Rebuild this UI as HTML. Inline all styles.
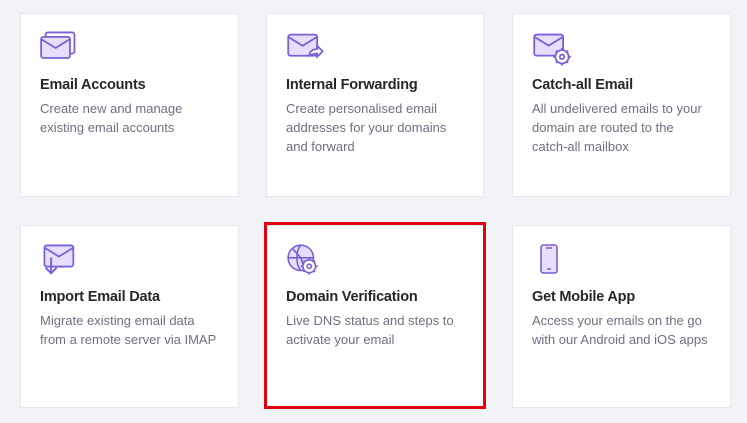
<!DOCTYPE html>
<html><head><style>
body{margin:0;width:747px;height:423px;background:#f2f3f7;position:relative;overflow:hidden;font-family:"Liberation Sans",sans-serif}
.c{position:absolute;background:#fff;border:1px solid #e6e7ee;box-sizing:border-box}
.c svg{position:absolute;left:19px;top:17px}
.t{position:absolute;left:19px;top:63px;font-size:14.5px;font-weight:bold;color:#26272b;letter-spacing:-0.2px}
.d{position:absolute;left:19px;top:85px;font-size:13px;line-height:19px;color:#6d7081;width:180px}
.r{position:absolute;left:264px;top:222px;width:222px;height:187px;border:3px solid #e3000f;box-sizing:border-box}
</style></head><body>
<div class="c" style="left:20px;top:13px;width:219px;height:184px">
<svg width="40" height="34" viewBox="0 0 36 30" fill="none" stroke="#7b5fd6" stroke-width="1.6"><rect x="5" y="1" width="26" height="19" rx="2"/><rect x="1" y="5" width="26" height="19" rx="2" fill="#e6defb"/><path d="M1 7l13 8 13-8"/></svg>
<div class="t">Email Accounts</div><div class="d">Create new and manage existing email accounts</div></div>
<div class="c" style="left:266px;top:13px;width:218px;height:184px">
<svg width="40" height="34" viewBox="0 0 36 30" fill="none" stroke="#7b5fd6" stroke-width="1.6"><rect x="2" y="3" width="26" height="19" rx="2" fill="#e6defb"/><path d="M2 5l13 8 13-8"/><path d="M21 22c0-4 3-6 7-6v-3l5 5-5 5v-3c-3 0-5 1-7 2z" fill="#fff"/></svg>
<div class="t">Internal Forwarding</div><div class="d">Create personalised email addresses for your domains and forward</div></div>
<div class="c" style="left:512px;top:13px;width:219px;height:184px">
<svg width="40" height="36" viewBox="0 0 36 32" fill="none" stroke="#7b5fd6" stroke-width="1.6"><rect x="2" y="3" width="26" height="19" rx="2" fill="#e6defb"/><path d="M2 5l13 8 13-8"/><circle cx="27" cy="23" r="6" fill="#fff"/><circle cx="27" cy="23" r="2"/><path d="M27 15v2M27 29v2M19 23h2M33 23h2M21.5 17.5l1.5 1.5M31 27l1.5 1.5M21.5 28.5l1.5-1.5M31 19l1.5-1.5"/></svg>
<div class="t">Catch-all Email</div><div class="d">All undelivered emails to your domain are routed to the catch&#8209;all mailbox</div></div>
<div class="c" style="left:20px;top:225px;width:219px;height:183px">
<svg width="40" height="36" viewBox="0 0 36 32" fill="none" stroke="#7b5fd6" stroke-width="1.6"><rect x="4" y="2" width="26" height="19" rx="2" fill="#e6defb"/><path d="M4 4l13 8 13-8"/><path d="M10 13v14M5 22l5 5 5-5" stroke-width="1.8"/></svg>
<div class="t">Import Email Data</div><div class="d">Migrate existing email data from a remote server via IMAP</div></div>
<div class="c" style="left:266px;top:225px;width:218px;height:183px">
<svg width="38" height="36" viewBox="0 0 36 34" fill="none" stroke="#7b5fd6" stroke-width="1.5"><circle cx="14" cy="14" r="12" fill="#e6defb"/><path d="M2 14h24M14 2c-5 6-5 18 0 24M6 5l8 9 4 12"/><circle cx="22" cy="22" r="6" fill="#fff"/><circle cx="22" cy="22" r="2"/><path d="M22 14v2M22 28v2M14 22h2M28 22h2M16.5 16.5l1.5 1.5M26 26l1.5 1.5M16.5 27.5l1.5-1.5M26 18l1.5-1.5"/></svg>
<div class="t">Domain Verification</div><div class="d">Live DNS status and steps to activate your email</div></div>
<div class="c" style="left:512px;top:225px;width:219px;height:183px">
<svg width="36" height="34" viewBox="0 0 36 32" fill="none" stroke="#7b5fd6" stroke-width="1.6"><rect x="9" y="1" width="16" height="28" rx="2.5" fill="#e6defb"/><path d="M14 4h6M15 25h4"/></svg>
<div class="t">Get Mobile App</div><div class="d">Access your emails on the go with our Android and iOS apps</div></div>
<div class="r"></div>
</body></html>
